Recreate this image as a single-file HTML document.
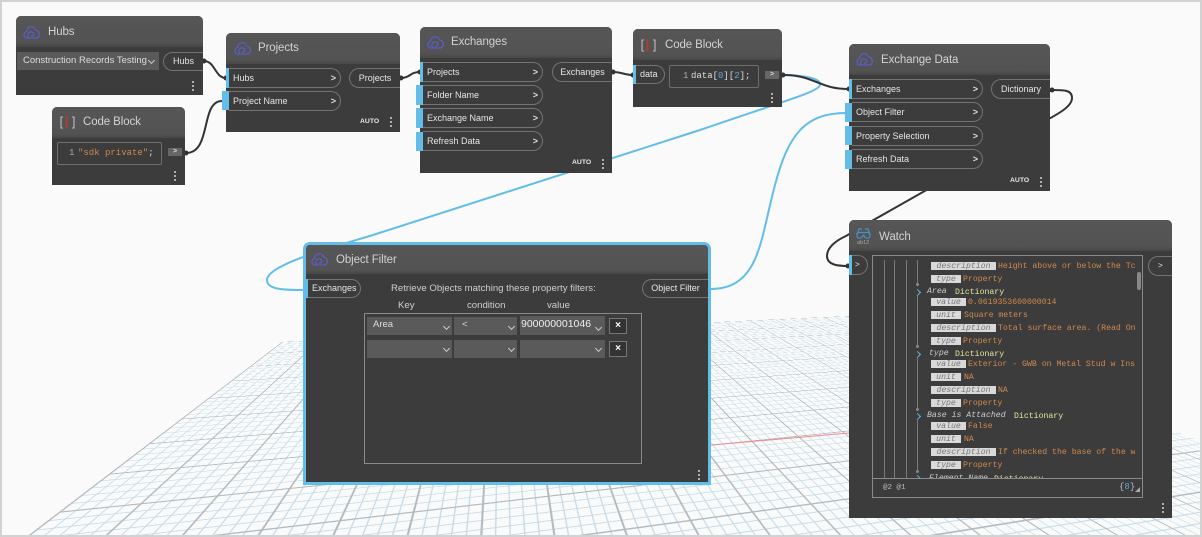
<!DOCTYPE html>
<html><head><meta charset="utf-8">
<style>
html,body{margin:0;padding:0;width:1202px;height:537px;overflow:hidden;background:#fafafa}
#p{position:relative;width:1202px;height:537px;overflow:hidden;background:#fafafa;font-family:"Liberation Sans",sans-serif}
#gw{position:absolute;left:0;top:0;width:1202px;height:537px;overflow:hidden;contain:paint}
#g{position:absolute;left:0;top:0;width:2000px;height:1200px;transform-origin:0 0;
transform:matrix3d(0.4225,0.0331,0,0.0001477,-0.3156,-0.1103,0,-0.00063,0,0,1,0,282,342,0,1);
background-color:#f9fafa;
background-image:linear-gradient(to right,#b3babf 2.5px,transparent 2.5px),linear-gradient(to bottom,#b3babf 2.5px,transparent 2.5px),linear-gradient(to right,#c6dbe8 2px,transparent 2px),linear-gradient(to bottom,#c6dbe8 2px,transparent 2px);
background-size:100px 100px,100px 100px,20px 20px,20px 20px}
#f{position:absolute;left:0;top:0;width:1202px;height:537px;box-sizing:border-box;border:2px solid #d2d2d2;z-index:50;pointer-events:none}
svg{position:absolute;left:0;top:0;overflow:visible}
.n{position:absolute;background:#3c3c3c;border-radius:5px 5px 0 0;overflow:hidden}
.h{position:absolute;left:0;top:0;right:0;background:linear-gradient(#565656 0,#535353 85%,#474747 100%)}
.a{position:absolute;white-space:nowrap}
.ti{font-size:11.5px;color:#d2d2d2;line-height:16px;height:16px;letter-spacing:-.1px}
.ip,.op{position:absolute;box-sizing:border-box;border:1px solid #747474;font-size:9px;color:#e6e6e6;line-height:18px;white-space:nowrap}
.ip{border-left:0;border-radius:0 10px 10px 0;padding-left:4px}
.op{border-right:0;border-radius:10px 0 0 10px;text-align:center}
.ip b{position:absolute;right:4px;top:0;font-size:9px;font-weight:700;color:#ddd}
.bar{position:absolute;background:#62bde8}
.dot{position:absolute;width:2px;height:2px;background:#b0b0b0;box-shadow:0 4px 0 #b0b0b0,0 8px 0 #b0b0b0}
.au{position:absolute;font-size:6.8px;color:#e8e8e8;font-weight:700;line-height:10px}
.cf{position:absolute;box-sizing:border-box;border:1px solid #6e6e6e;border-radius:2px;background:#3c3c3c;font-family:"Liberation Mono",monospace;font-size:9px;line-height:20px}
.arr{position:absolute;width:14px;height:8px;background:#666;color:#ddd;font-size:7px;font-weight:700;line-height:8px;text-align:center}
.dd{position:absolute;background:#5a5a5a;color:#ddd;font-size:9.5px;line-height:16px;white-space:nowrap}
.ch{position:absolute;width:4px;height:4px;border-right:1px solid #ccc;border-bottom:1px solid #ccc;transform:rotate(45deg)}
.xb{position:absolute;width:18px;height:16px;box-sizing:border-box;border:1px solid #777;background:#333;color:#fff;font-size:10px;font-weight:700;line-height:13px;text-align:center}
.m{position:absolute;font-family:"Liberation Mono",monospace;font-size:8.2px;line-height:11px;white-space:nowrap;color:#cf8a4e}
.tg{position:absolute;background:#d9d9d9;color:#777;font-style:italic;font-family:"Liberation Mono",monospace;font-size:8.2px;line-height:10px;height:8px;overflow:hidden;text-align:center}
.k{position:absolute;font-family:"Liberation Mono",monospace;font-size:8.2px;line-height:11px;font-style:italic;color:#ccc;white-space:nowrap}
.y{position:absolute;font-family:"Liberation Mono",monospace;font-size:8.2px;line-height:11px;color:#e4e6a0;white-space:nowrap}
.cv{position:absolute;width:4px;height:4px;border-right:1.5px solid #5db8e6;border-top:1.5px solid #5db8e6;transform:rotate(45deg)}
.vl{position:absolute;width:1px;background:#7a7a7a}
.nd{position:absolute;width:3px;height:3px;border-radius:2px;background:#888}
</style></head><body><div id="p">
<div id="gw"><div id="g"></div></div>

<svg width="1202" height="537" viewBox="0 0 1202 537" fill="none">
<line x1="700" y1="446" x2="849" y2="433" stroke="#f08a8a" stroke-width="1"/>
<g stroke="#62bde8" stroke-width="2">
<path d="M783,75 C805,75 822,79 820,85 C818,92 790,99 700,130 L373,235 C330,248 267,265 267,280 C267,290 285,290 304,290"/>
<path d="M710,289 C760,289 760,240 775,185 C788,135 805,113 846,113"/>
</g>
<g stroke="#333" stroke-width="2">
<path d="M204,61 C215,61 215,78 226,78"/>
<path d="M186,153 C212,153 200,101 222,101"/>
<path d="M401,78 C410,78 410,72 420,72"/>
<path d="M613,72 C622,72 624,75 633,75"/>
<path d="M783,75 C815,75 818,89 849,89"/>
<path d="M1051,90 C1065,90 1072,90 1072,98 C1072,106 1060,113 1045,121"/>
<path d="M930,188 L870,222 L846,236 C835,241 827,248 827,256 C827,265 838,266 848,266"/>
</g>
<g fill="#333">
<circle cx="204" cy="61" r="2.5"/><circle cx="226" cy="78" r="2.5"/><circle cx="186" cy="153" r="2.5"/><circle cx="401" cy="78" r="2.5"/><circle cx="420" cy="72" r="2.5"/><circle cx="613" cy="72" r="2.5"/><circle cx="633" cy="75" r="2.5"/><circle cx="783" cy="75" r="2.5"/><circle cx="849" cy="89" r="2.5"/><circle cx="1052" cy="90" r="2.5"/><circle cx="848" cy="266" r="2.5"/>
</g>
</svg>

<!-- Hubs -->
<div class="n" style="left:16px;top:16px;width:187px;height:79px"><div class="h" style="height:31px"></div></div>
<svg style="left:23px;top:25px" width="18" height="14" viewBox="0 0 18 14" fill="none" stroke="#5a5fd6" stroke-width="1.1"><path d="M4,13 C0,13 0,7 3.5,6.5 C4,1 11,0 12.5,5 C17,5 18,13 13,13 Z"/><path d="M6,13 C3,10 6,6 9,7 C12,8 11,12 8,11"/></svg>
<div class="a ti" style="left:48px;top:24px">Hubs</div>
<div class="dd" style="left:17px;top:52px;width:142px;height:18px;padding-left:6px;box-sizing:border-box;line-height:18px">Construction Records Testing</div>
<div class="ch" style="left:149px;top:58px"></div>
<div class="op" style="left:163px;top:52px;width:40px;height:19px;line-height:17px">Hubs</div>
<div class="dot" style="left:192px;top:81px"></div>

<!-- Projects -->
<div class="bar" style="left:222px;top:91px;width:7px;height:19px"></div>
<div class="n" style="left:226px;top:33px;width:174px;height:99px"><div class="h" style="height:31px"></div></div>
<svg style="left:234px;top:41px" width="18" height="14" viewBox="0 0 18 14" fill="none" stroke="#5a5fd6" stroke-width="1.1"><path d="M4,13 C0,13 0,7 3.5,6.5 C4,1 11,0 12.5,5 C17,5 18,13 13,13 Z"/><path d="M6,13 C3,10 6,6 9,7 C12,8 11,12 8,11"/></svg>
<div class="a ti" style="left:258px;top:40px">Projects</div>
<div class="bar" style="left:226px;top:68px;width:3px;height:20px"></div>
<div class="bar" style="left:222px;top:91px;width:7px;height:19px"></div>
<div class="ip" style="left:229px;top:68px;width:112px;height:20px">Hubs<b>&gt;</b></div>
<div class="ip" style="left:229px;top:91px;width:112px;height:20px">Project Name<b>&gt;</b></div>
<div class="op" style="left:349px;top:68px;width:51px;height:20px">Projects</div>
<div class="au" style="left:360px;top:117px">AUTO</div>
<div class="dot" style="left:390px;top:117px"></div>

<!-- Code Block 1 -->
<div class="n" style="left:52px;top:107px;width:133px;height:78px"><div class="h" style="height:31px"></div></div>
<svg style="left:60px;top:116px" width="16" height="13" viewBox="0 0 16 13" fill="none" stroke-width="1.1"><path d="M3,1 H1 V12 H3 M12,1 H14 V12 H12" stroke="#bdbdbd"/><path d="M6.5,0.5 V12.5" stroke="#c0392b" stroke-width="1.6"/></svg>
<div class="a ti" style="left:83px;top:114px">Code Block</div>
<div class="cf" style="left:57px;top:142px;width:105px;height:23px"><span class="a" style="left:11px;top:0;color:#aaa">1</span><span class="a" style="left:20px;top:0;color:#cf8a4e">"sdk private"<span style="color:#ddd">;</span></span></div>
<div class="arr" style="left:168px;top:148px">&gt;</div>
<div class="dot" style="left:174px;top:171px"></div>

<!-- Exchanges -->
<div class="bar" style="left:416px;top:85px;width:7px;height:20px"></div>
<div class="bar" style="left:416px;top:108px;width:7px;height:20px"></div>
<div class="bar" style="left:416px;top:132px;width:7px;height:19px"></div>
<div class="n" style="left:420px;top:27px;width:192px;height:146px"><div class="h" style="height:31px"></div></div>
<svg style="left:427px;top:35px" width="18" height="14" viewBox="0 0 18 14" fill="none" stroke="#5a5fd6" stroke-width="1.1"><path d="M4,13 C0,13 0,7 3.5,6.5 C4,1 11,0 12.5,5 C17,5 18,13 13,13 Z"/><path d="M6,13 C3,10 6,6 9,7 C12,8 11,12 8,11"/></svg>
<div class="a ti" style="left:451px;top:34px">Exchanges</div>
<div class="bar" style="left:420px;top:62px;width:3px;height:20px"></div>
<div class="bar" style="left:416px;top:85px;width:7px;height:20px"></div>
<div class="bar" style="left:416px;top:108px;width:7px;height:20px"></div>
<div class="bar" style="left:416px;top:132px;width:7px;height:19px"></div>
<div class="ip" style="left:423px;top:62px;width:120px;height:20px">Projects<b>&gt;</b></div>
<div class="ip" style="left:423px;top:85px;width:120px;height:20px">Folder Name<b>&gt;</b></div>
<div class="ip" style="left:423px;top:108px;width:120px;height:20px">Exchange Name<b>&gt;</b></div>
<div class="ip" style="left:423px;top:131px;width:120px;height:20px">Refresh Data<b>&gt;</b></div>
<div class="op" style="left:552px;top:62px;width:60px;height:20px">Exchanges</div>
<div class="au" style="left:572px;top:158px">AUTO</div>
<div class="dot" style="left:602px;top:159px"></div>

<!-- Code Block 2 -->
<div class="n" style="left:633px;top:29px;width:149px;height:78px"><div class="h" style="height:31px"></div></div>
<svg style="left:641px;top:39px" width="16" height="13" viewBox="0 0 16 13" fill="none" stroke-width="1.1"><path d="M3,1 H1 V12 H3 M12,1 H14 V12 H12" stroke="#bdbdbd"/><path d="M6.5,0.5 V12.5" stroke="#c0392b" stroke-width="1.6"/></svg>
<div class="a ti" style="left:665px;top:37px">Code Block</div>
<div class="bar" style="left:633px;top:65px;width:3px;height:19px"></div>
<div class="ip" style="left:636px;top:65px;width:29px;height:19px;line-height:17px">data</div>
<div class="cf" style="left:669px;top:65px;width:90px;height:23px"><span class="a" style="left:13px;top:0;color:#aaa">1</span><span class="a" style="left:21px;top:0;color:#ddd">data[<span style="color:#5aa7dc">0</span>][<span style="color:#5aa7dc">2</span>];</span></div>
<div class="arr" style="left:765px;top:71px">&gt;</div>
<div class="dot" style="left:771px;top:93px"></div>

<!-- Exchange Data -->
<div class="n" style="left:849px;top:44px;width:201px;height:147px"><div class="h" style="height:31px"></div></div>
<svg style="left:856px;top:52px" width="18" height="14" viewBox="0 0 18 14" fill="none" stroke="#5a5fd6" stroke-width="1.1"><path d="M4,13 C0,13 0,7 3.5,6.5 C4,1 11,0 12.5,5 C17,5 18,13 13,13 Z"/><path d="M6,13 C3,10 6,6 9,7 C12,8 11,12 8,11"/></svg>
<div class="a ti" style="left:881px;top:52px">Exchange Data</div>
<div class="bar" style="left:849px;top:79px;width:3px;height:20px"></div>
<div class="bar" style="left:845px;top:103px;width:7px;height:19px"></div>
<div class="bar" style="left:845px;top:126px;width:7px;height:19px"></div>
<div class="bar" style="left:845px;top:150px;width:7px;height:19px"></div>
<div class="ip" style="left:852px;top:79px;width:131px;height:20px">Exchanges<b>&gt;</b></div>
<div class="ip" style="left:852px;top:102px;width:131px;height:20px">Object Filter<b>&gt;</b></div>
<div class="ip" style="left:852px;top:126px;width:131px;height:20px">Property Selection<b>&gt;</b></div>
<div class="ip" style="left:852px;top:149px;width:131px;height:20px">Refresh Data<b>&gt;</b></div>
<div class="op" style="left:991px;top:79px;width:59px;height:20px">Dictionary</div>
<div class="au" style="left:1010px;top:176px">AUTO</div>
<div class="dot" style="left:1040px;top:177px"></div>

<!-- Object Filter -->
<div class="n" style="left:303px;top:242px;width:408px;height:243px;box-sizing:border-box;border:3px solid #62bde8;border-radius:7px 7px 0 0"><div class="h" style="height:29px"></div></div>
<svg style="left:311px;top:252px" width="18" height="14" viewBox="0 0 18 14" fill="none" stroke="#5a5fd6" stroke-width="1.1"><path d="M4,13 C0,13 0,7 3.5,6.5 C4,1 11,0 12.5,5 C17,5 18,13 13,13 Z"/><path d="M6,13 C3,10 6,6 9,7 C12,8 11,12 8,11"/></svg>
<div class="a ti" style="left:336px;top:252px">Object Filter</div>
<div class="bar" style="left:303px;top:279px;width:5px;height:19px"></div>
<div class="ip" style="left:308px;top:279px;width:53px;height:19px;line-height:17px">Exchanges</div>
<div class="a" style="left:391px;top:283px;font-size:9.6px;color:#cfcfcf;line-height:12px">Retrieve Objects matching these property filters:</div>
<div class="a" style="left:398px;top:300px;font-size:9.6px;color:#cfcfcf;line-height:12px">Key</div>
<div class="a" style="left:467px;top:300px;font-size:9.6px;color:#cfcfcf;line-height:12px">condition</div>
<div class="a" style="left:547px;top:300px;font-size:9.6px;color:#cfcfcf;line-height:12px">value</div>
<div class="op" style="left:642px;top:279px;width:66px;height:19px;line-height:17px">Object Filter</div>
<div class="a" style="left:364px;top:313px;width:278px;height:151px;box-sizing:border-box;border:1px solid #8a8a8a"></div>
<div class="dd" style="left:367px;top:317px;width:85px;height:18px;padding-left:6px;box-sizing:border-box">Area</div><div class="ch" style="left:444px;top:324px"></div>
<div class="dd" style="left:454px;top:317px;width:63px;height:18px;padding-left:8px;box-sizing:border-box">&lt;</div><div class="ch" style="left:509px;top:324px"></div>
<div class="dd" style="left:520px;top:316px;width:85px;height:19px;padding-left:1px;box-sizing:border-box;font-size:10.5px;color:#eee">900000001046</div><div class="ch" style="left:596px;top:325px"></div>
<div class="xb" style="left:609px;top:318px">×</div>
<div class="dd" style="left:367px;top:340px;width:85px;height:18px"></div><div class="ch" style="left:444px;top:346px"></div>
<div class="dd" style="left:454px;top:340px;width:63px;height:18px"></div><div class="ch" style="left:509px;top:346px"></div>
<div class="dd" style="left:520px;top:340px;width:85px;height:18px"></div><div class="ch" style="left:596px;top:346px"></div>
<div class="xb" style="left:609px;top:341px">×</div>
<div class="dot" style="left:698px;top:470px"></div>

<!-- Watch -->
<div class="n" style="left:849px;top:220px;width:323px;height:298px"><div class="h" style="height:31px"></div></div>
<svg style="left:856px;top:227px" width="16" height="18" viewBox="0 0 16 18" fill="none" stroke="#4a90c8" stroke-width="1.2"><path d="M1,8 L3,2 H6 M14,8 L12,2 H9"/><path d="M1,5.5 H14 M1,6 V9 C1,12 6,12 7,8.5 H8 C9,12 14,12 14,9 V6"/><text x="1" y="17" font-family="Liberation Sans,sans-serif" font-size="5.5" fill="#a8a8a8" stroke="none">ab12</text></svg>
<div class="a ti" style="left:879px;top:229px">Watch</div>
<div class="bar" style="left:849px;top:255px;width:3px;height:20px"></div>
<div class="ip" style="left:852px;top:255px;width:16px;height:20px;padding-left:3px;font-size:8px">&gt;</div>
<div class="op" style="left:1148px;top:256px;width:24px;height:20px;font-size:8px">&gt;</div>
<div class="a" style="left:872px;top:255px;width:271px;height:243px;box-sizing:border-box;border:1px solid #8a8a8a"></div>
<div class="a" style="left:873px;top:478px;width:269px;height:1px;background:#8a8a8a"></div>
<div class="vl" style="left:884px;top:260px;height:218px"></div>
<div class="vl" style="left:894px;top:260px;height:218px"></div>
<div class="vl" style="left:906px;top:260px;height:218px"></div>
<div class="vl" style="left:917px;top:260px;height:24px"></div><div class="nd" style="left:916px;top:283px"></div>
<div class="vl" style="left:917px;top:296px;height:50px"></div><div class="nd" style="left:916px;top:345px"></div>
<div class="vl" style="left:917px;top:358px;height:50px"></div><div class="nd" style="left:916px;top:408px"></div>
<div class="vl" style="left:917px;top:420px;height:50px"></div><div class="nd" style="left:916px;top:470px"></div>
<div class="a" style="left:1137px;top:272px;width:4px;height:18px;background:#888;border-radius:2px"></div>

<div class="a" style="left:873px;top:256px;width:262px;height:222px;overflow:hidden">
<div style="position:absolute;left:-873px;top:-255px;width:1202px;height:537px">
<div class="tg" style="left:931px;top:261px;width:65px">description</div><div class="m" style="left:998px;top:260px">Height above or below the Tc</div>
<div class="tg" style="left:931px;top:274px;width:30px">type</div><div class="m" style="left:963px;top:273px">Property</div>
<div class="cv" style="left:915px;top:289px"></div><div class="k" style="left:927px;top:285px">Area</div><div class="y" style="left:955px;top:286px">Dictionary</div>
<div class="tg" style="left:931px;top:297px;width:35px">value</div><div class="m" style="left:968px;top:296px">0.0619353600000014</div>
<div class="tg" style="left:931px;top:310px;width:30px">unit</div><div class="m" style="left:964px;top:309px">Square meters</div>
<div class="tg" style="left:931px;top:323px;width:65px">description</div><div class="m" style="left:998px;top:322px">Total surface area. (Read On</div>
<div class="tg" style="left:931px;top:336px;width:30px">type</div><div class="m" style="left:963px;top:335px">Property</div>
<div class="cv" style="left:915px;top:351px"></div><div class="k" style="left:929px;top:347px">type</div><div class="y" style="left:955px;top:348px">Dictionary</div>
<div class="tg" style="left:931px;top:359px;width:35px">value</div><div class="m" style="left:968px;top:358px">Exterior - GWB on Metal Stud w Ins</div>
<div class="tg" style="left:931px;top:372px;width:30px">unit</div><div class="m" style="left:964px;top:371px">NA</div>
<div class="tg" style="left:931px;top:385px;width:65px">description</div><div class="m" style="left:998px;top:384px">NA</div>
<div class="tg" style="left:931px;top:398px;width:30px">type</div><div class="m" style="left:963px;top:397px">Property</div>
<div class="cv" style="left:915px;top:413px"></div><div class="k" style="left:927px;top:409px">Base is Attached</div><div class="y" style="left:1014px;top:410px">Dictionary</div>
<div class="tg" style="left:931px;top:421px;width:35px">value</div><div class="m" style="left:968px;top:420px">False</div>
<div class="tg" style="left:931px;top:434px;width:30px">unit</div><div class="m" style="left:964px;top:433px">NA</div>
<div class="tg" style="left:931px;top:447px;width:65px">description</div><div class="m" style="left:998px;top:446px">If checked the base of the w</div>
<div class="tg" style="left:931px;top:460px;width:30px">type</div><div class="m" style="left:963px;top:459px">Property</div>
<div class="cv" style="left:915px;top:475px"></div><div class="k" style="left:929px;top:472px">Element Name</div><div class="y" style="left:994px;top:473px">Dictionary</div>
</div></div>
<div class="a" style="left:883px;top:483px;font-family:'Liberation Mono',monospace;font-size:7.5px;line-height:10px;color:#bbb">@2 @1</div>
<div class="a" style="left:1119px;top:482px;font-family:'Liberation Mono',monospace;font-size:9px;line-height:11px;color:#bbb">{<span style="color:#5aa7dc">8</span>}</div>
<svg style="left:1135px;top:487px" width="5" height="5" viewBox="0 0 5 5"><path d="M5,0 V5 H0 Z" fill="#aaa"/></svg>
<div class="dot" style="left:1162px;top:503px"></div>

<div id="f"></div>
</div></body></html>
